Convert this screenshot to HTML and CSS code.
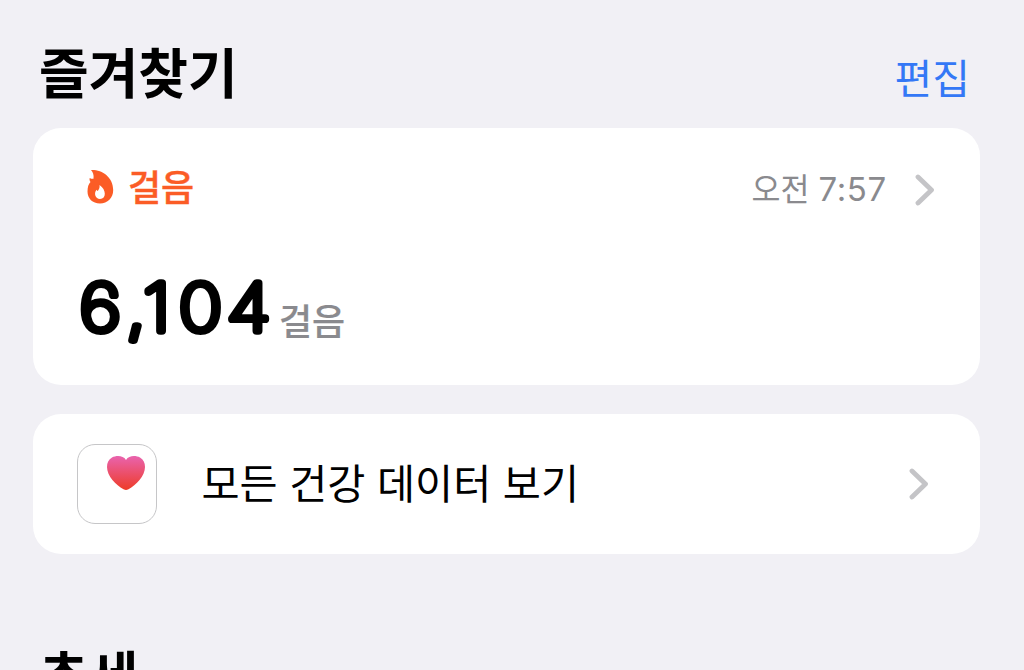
FILE: index.html
```html
<!DOCTYPE html>
<html lang="ko">
  <head>
    <meta charset="utf-8">
    <title>즐겨찾기</title>
    <link rel="stylesheet" href="styles.css">
  </head>

  <body>
    <div class="container">
      <div class="header">
        <h1>즐겨찾기</h1>
        <a class="edit">편집</a>
      </div>

      <!-- steps card -->
      <div class="card steps">
        <div class="steps-top">
          <svg class="flame" width="28" height="36" viewBox="0 0 28 36">
            <path fill="#fb5c26" fill-rule="evenodd" d="M5 1C16 .5 27.200 8 27.200 21C27.200 29 21.500 34.500 14 34.500C6.500 34.500 1.500 29.500 1.500 22.500C1.500 18 2.500 15 4.500 13C3.500 11.500 3.300 10 3.800 9C4.800 9.700 6 10 7.500 9.800C8 6 7 3 5 1ZM13.500 16C14 19 12.800 20.500 11.800 22C11.200 21.700 10.800 21.300 10.500 20.800C7.500 24.500 9.500 30 14 30C20.500 30 20.500 20.500 13.500 16Z"/>
          </svg>
          <span class="label">걸음</span>
          <span class="time">오전 <b>7:57</b></span>
          <svg class="chevron" width="20" height="32" viewBox="0 0 20 32">
            <path d="M3 3L16.500 16L3 29"/>
          </svg>
        </div>
        <div class="steps-value">
          <svg class="count" width="202" height="80" viewBox="0 0 202 80">
            <text transform="scale(1.13 1)" x="2.200 43.500 58.600 90 132.600" y="58">6,104</text>
          </svg>
          <span class="unit">걸음</span>
        </div>
      </div>

      <!-- all data card -->
      <div class="card all-data">
        <div class="health-icon">
          <svg width="40" height="36" viewBox="0 0 40 36">
            <defs>
              <linearGradient id="heart" x1="0" y1="0" x2="0" y2="1">
                <stop offset="0" stop-color="#e963ae"/>
                <stop offset="1" stop-color="#ee3c28"/>
              </linearGradient>
            </defs>
            <path fill="url(#heart)" d="M20 5C17 0 10 .5 6 2.500C2.500 4.500 1 8 1 12C1 21 10 30 17.500 34.300C19.500 35.300 20.500 35.300 22.500 34.300C30 30 39 21 39 12C39 8 37.500 4.500 34 2.500C30 .5 23 0 20 5Z"/>
          </svg>
        </div>
        <span class="all-label">모든 건강 데이터 보기</span>
        <svg class="chevron" width="20" height="32" viewBox="0 0 20 32">
          <path d="M3 3L16.500 16L3 29"/>
        </svg>
      </div>

      <h1 class="trends">추세</h1>
    </div>
  </body>
</html>
```
FILE: styles.css
```css
*{
  padding:0;
  margin:0;
  box-sizing:border-box;
}

body{
  height:670px;
  overflow:hidden;
  background-color:#f1f0f5;
  color:black;
  font-family:"Noto Sans CJK KR", sans-serif;
}

.container{
  height:670px;
  overflow:hidden;
  padding:31px 44px 0 33px;
}

.header{
  height:97px;
  display:flex;
  justify-content:space-between;
  padding:0 10px 0 6px;
}

h1{
  font-size:54px;
  line-height:80px;
  font-weight:700;
}

.edit{
  font-size:41px;
  line-height:60px;
  padding-top:15px;
  color:#3478f6;
}

.card{
  background-color:white;
  border-radius:28px;
}

.steps{
  height:257px;
  padding:33px 45px 0 53px;
}

.steps-top{
  height:56px;
  display:flex;
  align-items:center;
}

.flame{
  margin:0 14px 5px 0;
}

.label{
  font-size:36px;
  line-height:54px;
  padding-bottom:8px;
  font-weight:500;
  color:#fb5c26;
  -webkit-text-stroke:0.400px #fb5c26;
}

.time{
  margin-left:auto;
  margin-right:28px;
  padding-bottom:5px;
  font-size:31.500px;
  color:#8a8a8e;
}

.time b{
  font-family:Inter, sans-serif;
  font-weight:400;
  font-size:33px;
  letter-spacing:0.700px;
}

.chevron{
  fill:none;
  stroke:#c4c4c7;
  stroke-width:4.800;
  stroke-linecap:round;
  stroke-linejoin:round;
}

.steps-top .chevron{
  margin-top:2px;
}

.steps-value{
  display:flex;
  margin:56px 0 0 -9px;
}

.count{
  overflow:visible;
}

/* thin digits with a thick round outline, so the ends come out round */
.count text{
  font-family:Inter, sans-serif;
  font-size:65px;
  font-weight:100;
  stroke:black;
  stroke-width:7.300;
  stroke-linejoin:round;
}

.unit{
  margin-top:19px;
  font-size:36px;
  line-height:54px;
  font-weight:500;
  color:#8a8a8e;
  -webkit-text-stroke:0.200px #8a8a8e;
}

.all-data{
  height:140px;
  margin-top:29px;
  padding:0 51px 0 44px;
  display:flex;
  align-items:center;
}

.health-icon{
  width:80px;
  height:80px;
  padding:10px 0 0 28px;
  border:1.500px solid #c6c6c8;
  border-radius:18px;
}

.all-label{
  margin-left:44.500px;
  margin-right:auto;
  padding-bottom:6px;
  font-size:41.400px;
  line-height:60px;
}

.trends{
  margin:80px 0 0 6px;
}
```
